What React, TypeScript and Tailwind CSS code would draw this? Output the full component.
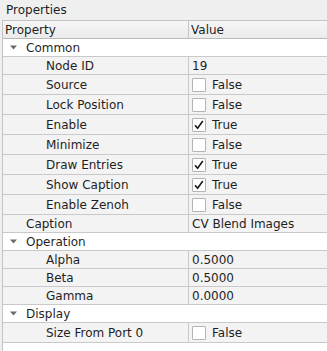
import React from "react"

type Row =
  | { kind: "group"; name: string }
  | { kind: "text"; name: string; value: string; top?: boolean }
  | { kind: "bool"; name: string; value: boolean }

const rows: Row[] = [
  { kind: "group", name: "Common" },
  { kind: "text", name: "Node ID", value: "19" },
  { kind: "bool", name: "Source", value: false },
  { kind: "bool", name: "Lock Position", value: false },
  { kind: "bool", name: "Enable", value: true },
  { kind: "bool", name: "Minimize", value: false },
  { kind: "bool", name: "Draw Entries", value: true },
  { kind: "bool", name: "Show Caption", value: true },
  { kind: "bool", name: "Enable Zenoh", value: false },
  { kind: "text", name: "Caption", value: "CV Blend Images", top: true },
  { kind: "group", name: "Operation" },
  { kind: "text", name: "Alpha", value: "0.5000" },
  { kind: "text", name: "Beta", value: "0.5000" },
  { kind: "text", name: "Gamma", value: "0.0000" },
  { kind: "group", name: "Display" },
  { kind: "bool", name: "Size From Port 0", value: false },
]

function Arrow() {
  return (
    <svg width="7" height="5" viewBox="0 0 7 5" className="mr-[9px]">
      <path d="M0 0.5 L7 0.5 L3.5 4.5 Z" fill="#6b6b6b" />
    </svg>
  )
}

function CheckBox({ checked }: { checked: boolean }) {
  return (
    <div className="w-[14px] h-[14px] border border-[#b3b3b3] bg-white rounded-[1px] flex items-center justify-center">
      {checked && (
        <svg width="12" height="12" viewBox="0 0 12 12">
          <path d="M2 6.2 L4.6 9.2 L9.8 2" fill="none" stroke="#1a1a1a" strokeWidth="1.6" />
        </svg>
      )}
    </div>
  )
}

function PropertyRow({ row }: { row: Row }) {
  if (row.kind === "group") {
    return (
      <div className="flex h-[18px] border-b border-[#c9c9c9] bg-white">
        <div className="flex items-center pl-[7px]">
          <Arrow />
          <span>{row.name}</span>
        </div>
      </div>
    )
  }
  const tall = row.kind === "bool"
  const indent = row.kind === "text" && row.top ? "pl-[23px]" : "pl-[43px]"
  return (
    <div className={`flex border-b border-[#c9c9c9] bg-[#f3f3f3] ${tall ? "h-[20px]" : "h-[18px]"}`}>
      <div className={`w-[186px] shrink-0 border-r border-[#c9c9c9] flex items-center ${indent}`}>
        {row.name}
      </div>
      <div className="flex-1 flex items-center pl-[3px]">
        {row.kind === "bool" ? (
          <>
            <CheckBox checked={row.value} />
            <span className="ml-[6px]">{row.value ? "True" : "False"}</span>
          </>
        ) : (
          <span>{row.value}</span>
        )}
      </div>
    </div>
  )
}

export default function App() {
  return (
    <div className="w-[327px] h-[351px] bg-[#efefef] flex flex-col text-[12px] text-[#1f1f1f] font-['DejaVu_Sans',sans-serif] overflow-hidden">
      <div className="h-[20px] shrink-0 flex items-center px-[6px]">Properties</div>
      <div className="flex-1 ml-[2px] border-l border-t border-[#c4c4c4] bg-white">
        <div className="flex h-[18px] border-b border-[#b9b9b9] bg-gradient-to-b from-[#f6f6f6] to-[#ebebeb]">
          <div className="w-[186px] shrink-0 border-r border-[#c4c4c4] flex items-center pl-[2px]">Property</div>
          <div className="flex-1 flex items-center pl-[2px]">Value</div>
        </div>
        {rows.map((r) => (
          <PropertyRow key={r.name} row={r} />
        ))}
      </div>
    </div>
  )
}
